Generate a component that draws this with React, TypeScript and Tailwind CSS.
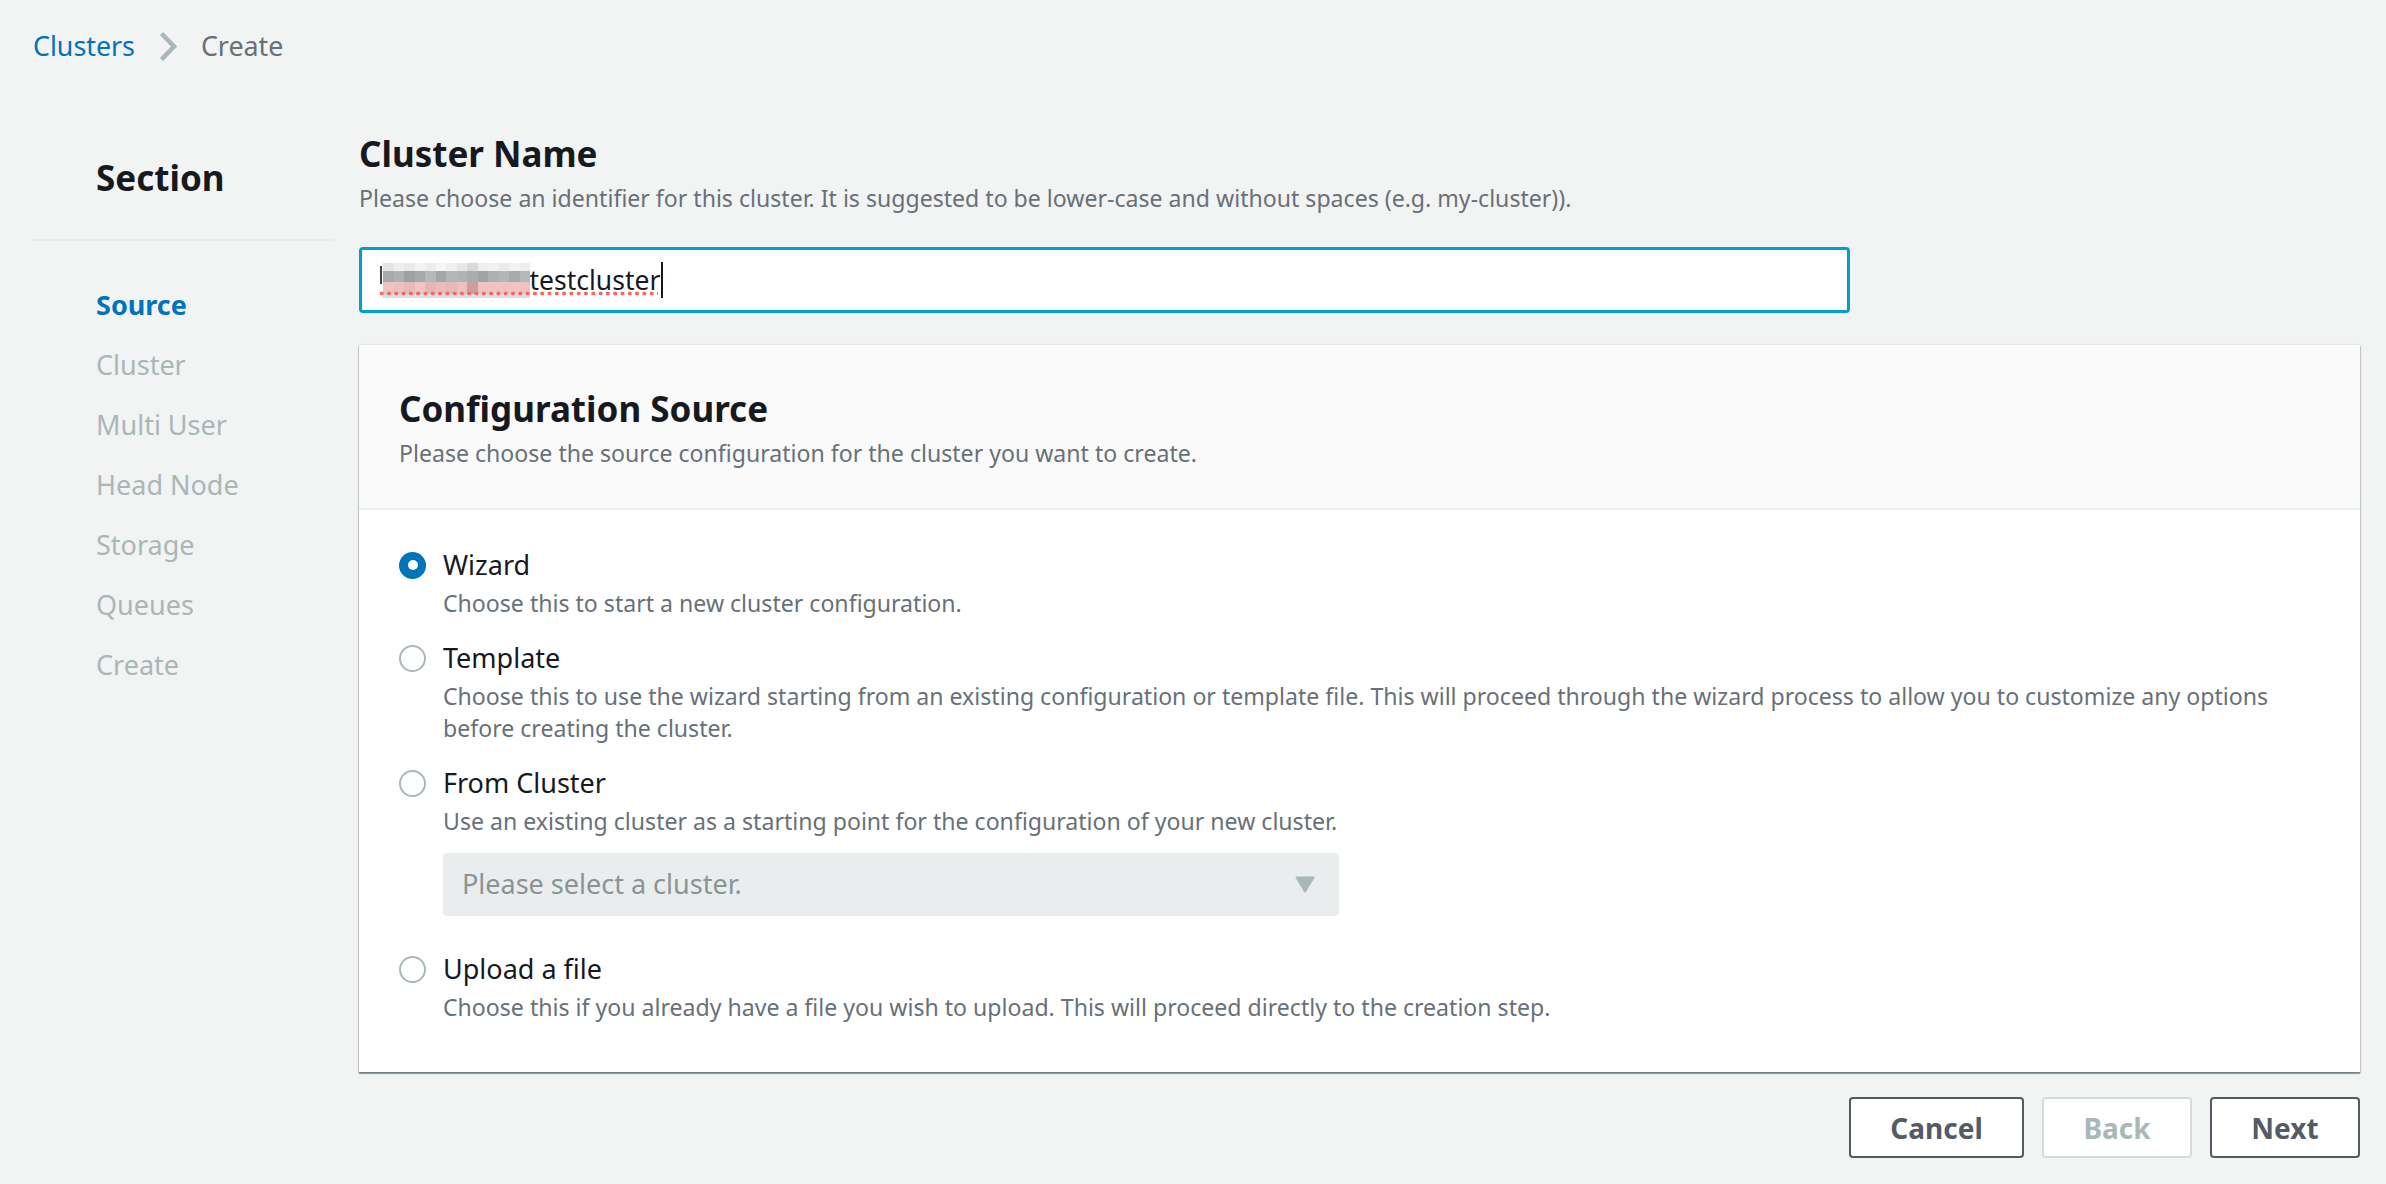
import React from "react";

const navItems = ["Source", "Cluster", "Multi User", "Head Node", "Storage", "Queues", "Create"];

function Radio({ checked }: { checked?: boolean }) {
  return checked ? (
    <div className="w-[27px] h-[27px] rounded-full bg-[#0073bb] flex items-center justify-center shrink-0">
      <div className="w-[10px] h-[10px] rounded-full bg-white" />
    </div>
  ) : (
    <div className="w-[27px] h-[27px] rounded-full border-2 border-[#aab7b8] bg-white shrink-0" />
  );
}

function Option({
  label,
  desc,
  checked,
  children,
}: {
  label: string;
  desc: React.ReactNode;
  checked?: boolean;
  children?: React.ReactNode;
}) {
  return (
    <div className="flex flex-col">
      <div className="flex items-center h-[36px]">
        <Radio checked={checked} />
        <span className="ml-[17px] text-[27px] leading-[36px] text-[#16191f]">{label}</span>
      </div>
      <div className="pl-[44px] mt-[4px] text-[23.1px] leading-[32px] text-[#687078]">{desc}</div>
      {children}
    </div>
  );
}

const blurTop = ["#e4e5e6", "#eeeeef", "#e9eaeb", "#f3f3f3", "#eceded", "#f5f5f5", "#f0f0f1", "#e7e8e8", "#d9dadb", "#eeeeee", "#f1f1f1", "#ebebec", "#f2f2f2", "#eeeeee"];
const blurMid = ["#a6abae", "#aeb2b4", "#9da2a5", "#a4a9ac", "#b5b9bb", "#a2a7aa", "#b3b7b9", "#b0b4b6", "#a9adb0", "#9fa4a7", "#adb1b3", "#b2b6b8", "#a7abae", "#b4b8ba"];
const blurLow = ["#efc3c2", "#ebc0bf", "#e6bbba", "#efc6c5", "#e2b7b6", "#e8bdbc", "#e4b9b8", "#ebc1c0", "#cd9e9d", "#eec4c3", "#efc5c4", "#eec3c2", "#f0c6c5", "#edc2c1"];

export default function App() {
  return (
    <div className="w-[2386px] h-[1184px] bg-[#f2f3f3] font-['Noto_Sans',sans-serif] overflow-hidden">
      {/* Breadcrumb */}
      <div className="h-[92px] flex items-center pl-[33px]">
        <span className="text-[26.8px] text-[#0073bb]">Clusters</span>
        <svg className="ml-[24px]" width="18" height="31" viewBox="0 0 18 31">
          <polyline points="2.5,2.5 15,15.5 2.5,28.5" fill="none" stroke="#aab7b8" strokeWidth="4.5" />
        </svg>
        <span className="ml-[24px] text-[26.8px] text-[#687078]">Create</span>
      </div>

      <div className="flex">
        {/* Sidebar */}
        <div className="ml-[32px] w-[303px] shrink-0 pt-[65px]">
          <div className="pl-[64px] text-[35px] leading-[41px] font-bold text-[#16191f]">Section</div>
          <div className="mt-[41px] h-[2px] bg-[#eaeded]" />
          <div className="mt-[34px] flex flex-col">
            {navItems.map((item, i) => (
              <div
                key={item}
                className={
                  i === 0
                    ? "h-[60px] flex items-center pl-[64px] text-[27px] font-bold text-[#0073bb]"
                    : "h-[60px] flex items-center pl-[64px] text-[27px] text-[#aab7b8]"
                }
              >
                {item}
              </div>
            ))}
          </div>
        </div>

        {/* Main */}
        <div className="ml-[24px] w-[2001px] pt-[41px] flex flex-col">
          <div className="text-[35px] leading-[41px] font-bold text-[#16191f]">Cluster Name</div>
          <div className="mt-[8px] text-[23.1px] leading-[32px] text-[#687078]">
            Please choose an identifier for this cluster. It is suggested to be lower-case and without spaces (e.g. my-cluster)).
          </div>

          {/* Input */}
          <div className="mt-[33px] w-[1491px] h-[66px] rounded-[4px] border-[3px] border-[#00a1c9] bg-white flex items-center pl-[18px]">
            <div className="relative flex items-center h-[40px]">
              <div className="relative w-[148px] h-[40px]">
                <div className="absolute left-0 top-[6px] w-[2px] h-[18px] bg-[#444]" />
                <div className="absolute left-[3px] top-[3px] flex flex-col">
                  <div className="flex">
                    {blurTop.map((c, i) => (
                      <div key={"t" + i} className="w-[10.5px] h-[8px]" style={{ backgroundColor: c }} />
                    ))}
                  </div>
                  <div className="flex">
                    {blurMid.map((c, i) => (
                      <div key={"m" + i} className="w-[10.5px] h-[11px]" style={{ backgroundColor: c }} />
                    ))}
                  </div>
                  <div className="flex">
                    {blurLow.map((c, i) => (
                      <div key={"l" + i} className="w-[10.5px] h-[12px]" style={{ backgroundColor: c }} />
                    ))}
                  </div>
                  <div className="flex">
                    {blurLow.map((_, i) => (
                      <div key={"b" + i} className="w-[10.5px] h-[4px] bg-[#d6e1e7]" />
                    ))}
                  </div>
                </div>
              </div>
              <span className="-ml-[7px] text-[26.5px] leading-[36px] text-[#16191f]">-testcluster</span>
              <div className="ml-[1px] w-[2px] h-[36px] bg-[#16191f]" />
              <div className="absolute left-[-2px] top-[31px] w-[280px] h-[5px] bg-[radial-gradient(circle,#f8685f_1.7px,transparent_2.2px)] bg-[length:7.3px_5px]" />
            </div>
          </div>

          {/* Card */}
          <div className="mt-[32px] w-[2001px] bg-white shadow-[0_2px_1px_0_rgba(0,28,36,0.35),1px_1px_1px_0_rgba(0,28,36,0.15),-1px_1px_1px_0_rgba(0,28,36,0.15),0_-1px_1px_0_rgba(0,28,36,0.06)]">
            <div className="bg-[#fafafa] border-b-2 border-[#eaeded] pl-[40px] pt-[43px] pb-[39px]">
              <div className="text-[35px] leading-[41px] font-bold text-[#16191f]">Configuration Source</div>
              <div className="mt-[8px] text-[23.1px] leading-[32px] text-[#687078]">
                Please choose the source configuration for the cluster you want to create.
              </div>
            </div>
            <div className="pl-[40px] pr-[60px] pt-[37px] pb-[49px] flex flex-col gap-[21px]">
              <Option checked label="Wizard" desc="Choose this to start a new cluster configuration." />
              <Option
                label="Template"
                desc={
                  <>
                    Choose this to use the wizard starting from an existing configuration or template file. This will proceed through the wizard process to allow you to customize any options
                    <br />
                    before creating the cluster.
                  </>
                }
              />
              <Option label="From Cluster" desc="Use an existing cluster as a starting point for the configuration of your new cluster.">
                <div className="ml-[44px] mt-[16px] mb-[14px] w-[896px] h-[63px] rounded-[4px] bg-[#eaeded] flex items-center justify-between pl-[19px] pr-[24px]">
                  <span className="text-[27px] text-[#879596]">Please select a cluster.</span>
                  <svg width="20" height="17" viewBox="0 0 20 17">
                    <polygon points="1.5,1.5 18.5,1.5 10,15.5" fill="#aab7b8" stroke="#aab7b8" strokeWidth="2" strokeLinejoin="round" />
                  </svg>
                </div>
              </Option>
              <Option
                label="Upload a file"
                desc="Choose this if you already have a file you wish to upload. This will proceed directly to the creation step."
              />
            </div>
          </div>

          {/* Buttons */}
          <div className="mt-[25px] flex justify-end gap-[18px]">
            <button className="w-[175px] h-[61px] rounded-[4px] border-2 border-[#545b64] bg-white text-[28px] font-bold text-[#545b64]">
              Cancel
            </button>
            <button className="w-[150px] h-[61px] rounded-[4px] border-2 border-[#d5dbdb] bg-white text-[28px] font-bold text-[#aab7b8]">
              Back
            </button>
            <button className="w-[150px] h-[61px] rounded-[4px] border-2 border-[#545b64] bg-white text-[28px] font-bold text-[#545b64]">
              Next
            </button>
          </div>
        </div>
      </div>
    </div>
  );
}
